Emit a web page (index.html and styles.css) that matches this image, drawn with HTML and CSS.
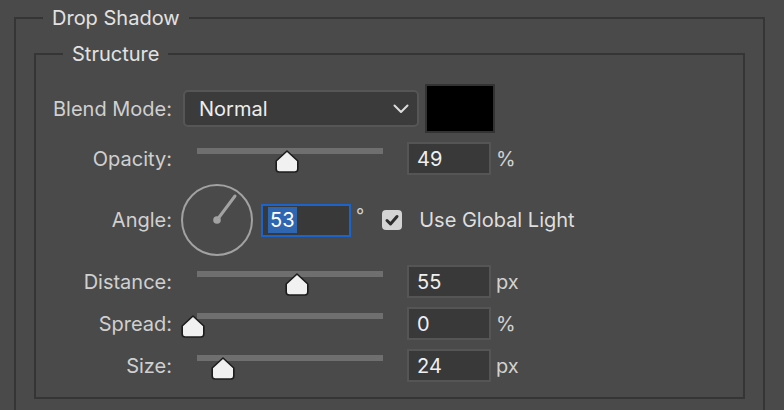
FILE: index.html
```html
<!DOCTYPE html>
<html>
<head>
<meta charset="utf-8">
<link rel="stylesheet" href="styles.css">
</head>
<body>
<fieldset class="group outer">
  <legend class="legend outer-legend">Drop Shadow</legend>
  <fieldset class="group inner">
    <legend class="legend inner-legend">Structure</legend>
    <div class="rows">
      <div class="row row-blend">
        <span class="label">Blend Mode:</span>
        <div class="select">
          <span class="select-text">Normal</span>
          <svg class="chevron" width="16" height="10" viewBox="0 0 16 10"><path d="M1.5 1.5 L8 8 L14.5 1.5" fill="none" stroke="#dcdcdc" stroke-width="2" stroke-linecap="round" stroke-linejoin="round"/></svg>
        </div>
        <div class="swatch"></div>
      </div>

      <div class="row row-slider">
        <span class="label">Opacity:</span>
        <div class="slider">
          <div class="track"></div>
          <svg class="thumb" style="left:78px" width="24" height="23" viewBox="0 0 24 23"><path d="M12 1 L22.8 11 L22.8 19 Q22.8 22 19.8 22 L4.2 22 Q1.2 22 1.2 19 L1.2 11 Z" fill="#f1f1f1" stroke="#1c1c1c" stroke-width="1.6" stroke-linejoin="round"/></svg>
        </div>
        <div class="field">49</div>
        <span class="unit">%</span>
      </div>

      <div class="row row-angle">
        <span class="label">Angle:</span>
        <svg class="dial" width="72" height="72" viewBox="0 0 72 72">
          <circle cx="36" cy="36" r="35" fill="none" stroke="#a2a2a2" stroke-width="2"/>
          <line x1="36" y1="36" x2="54" y2="12" stroke="#a2a2a2" stroke-width="3" stroke-linecap="round"/>
          <circle cx="36" cy="36" r="3.8" fill="#a2a2a2"/>
        </svg>
        <div class="field field-active"><span class="selected">53</span></div>
        <span class="unit degree">°</span>
        <span class="checkbox">
          <svg width="20" height="20" viewBox="0 0 20 20"><path d="M5 10.5 L8.5 14 L15 6.5" fill="none" stroke="#2e2e2e" stroke-width="3" stroke-linecap="round" stroke-linejoin="round"/></svg>
        </span>
        <span class="check-label">Use Global Light</span>
      </div>

      <div class="row row-slider">
        <span class="label">Distance:</span>
        <div class="slider">
          <div class="track"></div>
          <svg class="thumb" style="left:88px" width="24" height="23" viewBox="0 0 24 23"><path d="M12 1 L22.8 11 L22.8 19 Q22.8 22 19.8 22 L4.2 22 Q1.2 22 1.2 19 L1.2 11 Z" fill="#f1f1f1" stroke="#1c1c1c" stroke-width="1.6" stroke-linejoin="round"/></svg>
        </div>
        <div class="field">55</div>
        <span class="unit">px</span>
      </div>

      <div class="row row-slider">
        <span class="label">Spread:</span>
        <div class="slider">
          <div class="track"></div>
          <svg class="thumb" style="left:-16px" width="24" height="23" viewBox="0 0 24 23"><path d="M12 1 L22.8 11 L22.8 19 Q22.8 22 19.8 22 L4.2 22 Q1.2 22 1.2 19 L1.2 11 Z" fill="#f1f1f1" stroke="#1c1c1c" stroke-width="1.6" stroke-linejoin="round"/></svg>
        </div>
        <div class="field">0</div>
        <span class="unit">%</span>
      </div>

      <div class="row row-slider">
        <span class="label">Size:</span>
        <div class="slider">
          <div class="track"></div>
          <svg class="thumb" style="left:14px" width="24" height="23" viewBox="0 0 24 23"><path d="M12 1 L22.8 11 L22.8 19 Q22.8 22 19.8 22 L4.2 22 Q1.2 22 1.2 19 L1.2 11 Z" fill="#f1f1f1" stroke="#1c1c1c" stroke-width="1.6" stroke-linejoin="round"/></svg>
        </div>
        <div class="field">24</div>
        <span class="unit">px</span>
      </div>
    </div>
  </fieldset>
</fieldset>
</body>
</html>
```

FILE: styles.css
```css
html, body {
  margin: 0;
  padding: 0;
  background: #4a4a4a;
  overflow: hidden;
}

body {
  font-family: Inter, "Liberation Sans", Arial, sans-serif;
  font-size: 20px;
  color: #cfcfcf;
  width: 784px;
  height: 410px;
}

.group {
  border: 2px solid #353535;
  margin: 0;
  min-width: 0;
}

.outer {
  margin: 7px 0 0 14px;
  width: 751px;
  box-sizing: border-box;
  padding: 14px 18px 14px 18px;
}

.legend {
  line-height: 22px;
  height: 22px;
  padding: 0 9px;
  color: #e2e2e2;
}

.outer-legend {
  margin-left: 9px;
}

.inner {
  padding: 19px 0 15px 0;
}

.inner-legend {
  margin-left: 27px;
}

.rows {
  display: flex;
  flex-direction: column;
  gap: 9px;
}

.row {
  display: flex;
  align-items: center;
}

.label {
  width: 136px;
  text-align: right;
  flex: none;
  color: #d0d0d0;
}

.row-blend {
  height: 49px;
}

.select {
  margin-left: 11px;
  width: 236px;
  height: 37px;
  box-sizing: border-box;
  border: 2px solid #565656;
  border-radius: 5px;
  background: #3b3b3b;
  display: flex;
  align-items: center;
  padding: 0 8px 0 14px;
}

.select-text {
  flex: 1;
  color: #eeeeee;
}

.chevron {
  display: block;
}

.swatch {
  margin-left: 6px;
  width: 70px;
  height: 49px;
  box-sizing: border-box;
  border: 2px solid #333333;
  background: #000000;
}

.row-slider {
  height: 33px;
  align-items: center;
}

.slider {
  position: relative;
  margin-left: 25px;
  width: 186px;
  height: 33px;
  align-self: flex-start;
}

.track {
  margin-top: 6px;
  height: 6px;
  background: #6f6f6f;
}

.thumb {
  position: absolute;
  top: 8px;
  display: block;
}

.field {
  margin-left: 24px;
  width: 84px;
  height: 33px;
  box-sizing: border-box;
  border: 2px solid #555555;
  background: #393939;
  color: #efefef;
  display: flex;
  align-items: center;
  padding-left: 8px;
}

.unit {
  margin-left: 5px;
  color: #d2d2d2;
}

.row-angle {
  height: 72px;
}

.dial {
  margin-left: 9px;
  display: block;
  flex: none;
}

.field-active {
  margin-left: 8px;
  width: 90px;
  border-color: #1d63cc;
  padding-left: 5px;
}

.selected {
  background: #2e66b1;
  color: #ffffff;
  line-height: 26px;
  padding: 0 2px;
}

.degree {
  margin-left: 5px;
  align-self: flex-start;
  margin-top: 23px;
  font-size: 18px;
  line-height: 18px;
}

.checkbox {
  margin-left: 18px;
  width: 20px;
  height: 20px;
  border-radius: 4px;
  background: #d4d4d4;
  display: flex;
  align-items: center;
  justify-content: center;
}

.checkbox svg {
  display: block;
}

.check-label {
  margin-left: 17px;
  color: #dedede;
}
```
